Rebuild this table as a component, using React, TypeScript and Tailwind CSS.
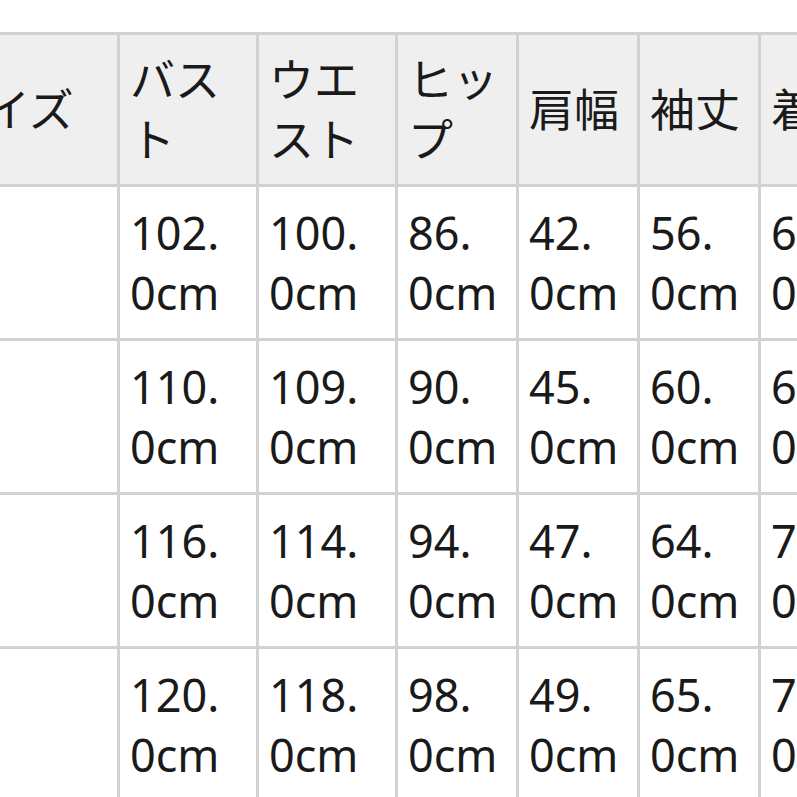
const headers: string[][] = [
  ['サイズ'],
  ['バス', 'ト'],
  ['ウエ', 'スト'],
  ['ヒッ', 'プ'],
  ['肩幅'],
  ['袖丈'],
  ['着丈'],
]

// each value is split where the narrow column wraps it
const rows: string[][][] = [
  [['S'], ['102.', '0cm'], ['100.', '0cm'], ['86.', '0cm'], ['42.', '0cm'], ['56.', '0cm'], ['66.', '0cm']],
  [['M'], ['110.', '0cm'], ['109.', '0cm'], ['90.', '0cm'], ['45.', '0cm'], ['60.', '0cm'], ['68.', '0cm']],
  [['L'], ['116.', '0cm'], ['114.', '0cm'], ['94.', '0cm'], ['47.', '0cm'], ['64.', '0cm'], ['70.', '0cm']],
  [['XL'], ['120.', '0cm'], ['118.', '0cm'], ['98.', '0cm'], ['49.', '0cm'], ['65.', '0cm'], ['72.', '0cm']],
]

function Lines({ lines }: { lines: string[] }) {
  return (
    <div>
      {lines.map((l, i) => (
        <div key={i} className="whitespace-nowrap">
          {l}
        </div>
      ))}
    </div>
  )
}

export default function App() {
  return (
    <div
      className="w-[797px] h-[797px] overflow-hidden bg-white pt-8 text-[45px] leading-[60px] font-normal text-[#1a1a1a]"
      style={{ fontFamily: '"Noto Sans", "Noto Sans CJK JP", sans-serif' }}
    >
      {/* size chart, scrolled sideways so the first column is partly hidden */}
      <div className="-ml-[73px] w-max grid grid-cols-[187px_136px_136px_118px_118px_118px_118px] gap-[3px] p-[3px] bg-[#d2d2d2]">
        {headers.map((h, i) => (
          <div key={i} className="h-[149px] flex items-center px-[10px] bg-[#efefef]">
            <Lines lines={h} />
          </div>
        ))}
        {rows.map((r, ri) =>
          r.map((c, ci) => (
            <div key={`${ri}-${ci}`} className="h-[151px] flex items-center px-[10px] bg-white">
              <Lines lines={c} />
            </div>
          ))
        )}
      </div>
    </div>
  )
}
